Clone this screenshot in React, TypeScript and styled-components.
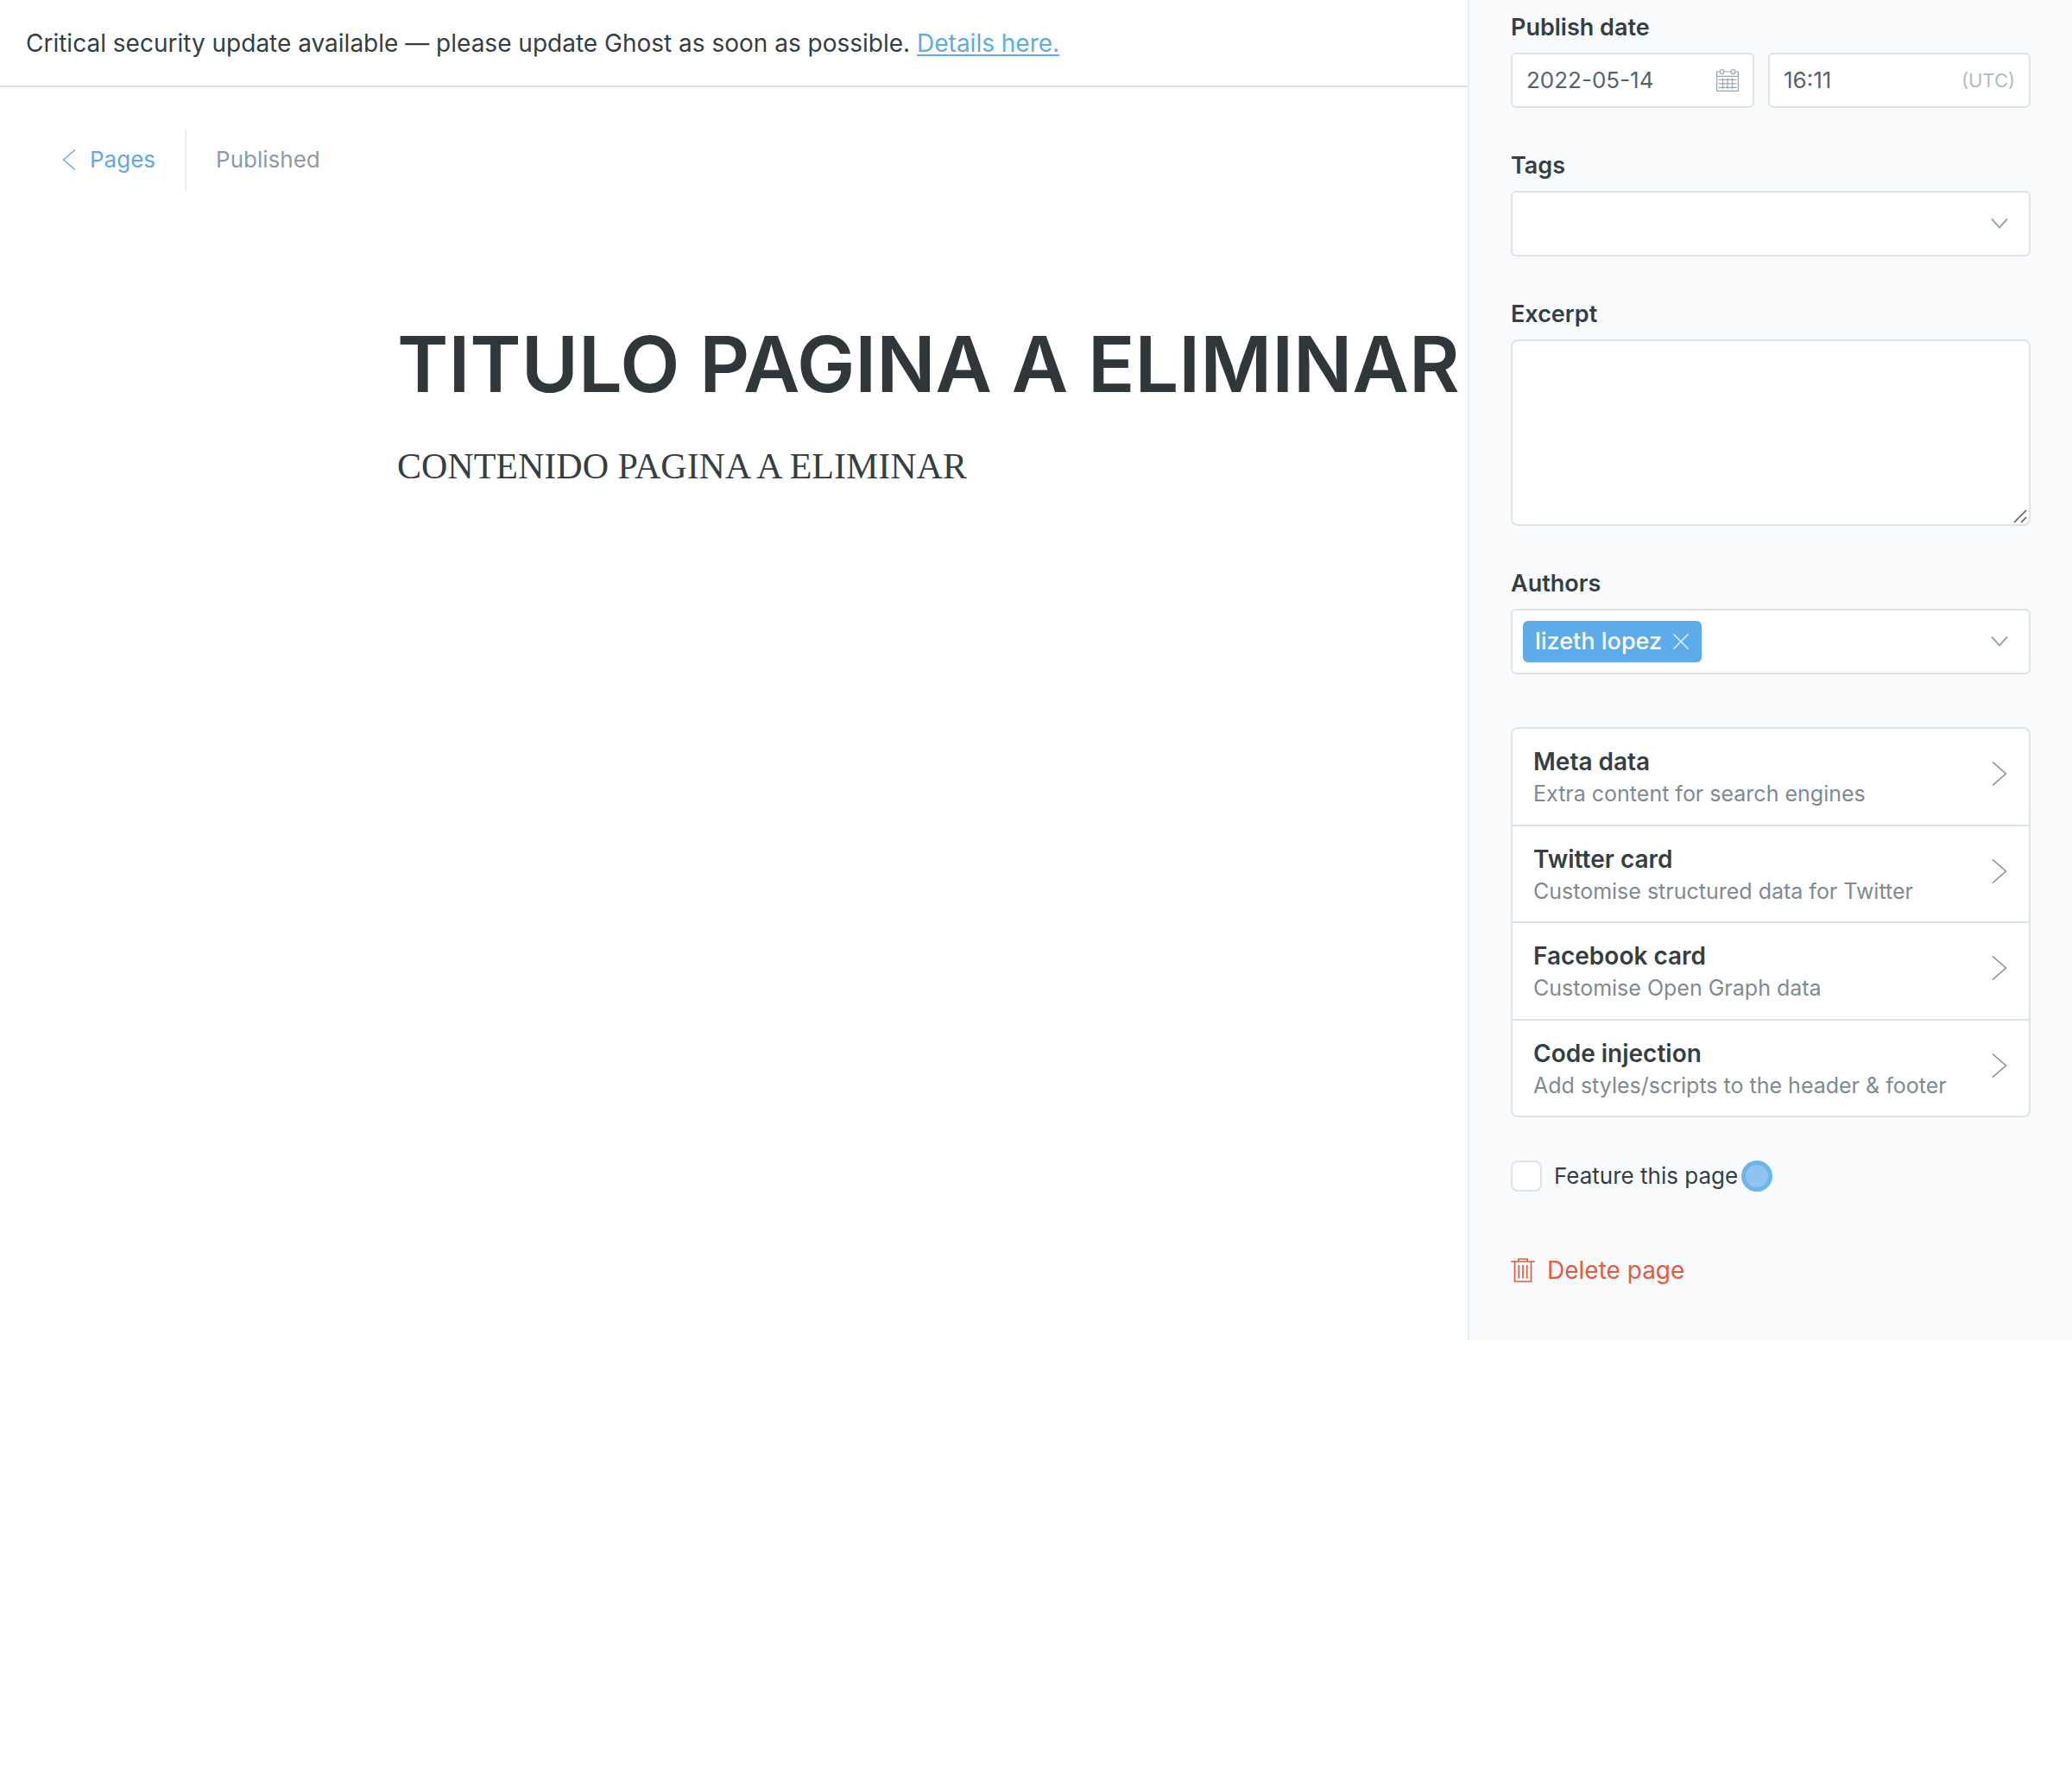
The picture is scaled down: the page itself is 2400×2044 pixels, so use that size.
import React, { useState } from "react";
import styled, { createGlobalStyle } from "styled-components";

const color = {
  ink: "#343f44",
  heading: "#30373b",
  field: "#55646c",
  muted: "#7c8b95",
  faint: "#b0bcc3",
  icon: "#98a8b3",
  blue: "#5dabe9",
  red: "#e25d3e",
  line: "#dae4eb",
  panel: "#f9fafc",
};

const GlobalStyle = createGlobalStyle`
  *, *::before, *::after { box-sizing: border-box; }
  body {
    margin: 0;
    background: #fff;
    color: ${color.ink};
    font-family: Inter, "Liberation Sans", sans-serif;
    font-size: 26px;
    line-height: 32px;
  }
  button, input, select, textarea { font: inherit; color: inherit; }
`;

const Layout = styled.div`
  display: grid;
  grid-template-columns: minmax(0, 1fr) 700px;
  align-items: start;
`;

const Main = styled.main`
  min-width: 0;
`;

const Alert = styled.aside`
  padding: 33px 30px 32px;
  border-bottom: 2px solid #dfe1e3;
  font-size: 28px;
  line-height: 34px;
`;

const AlertLink = styled.a`
  color: ${color.blue};
  text-decoration: underline;
  text-decoration-thickness: 2px;
  text-underline-offset: 3px;
  text-decoration-skip-ink: none;
`;

const Header = styled.header`
  display: flex;
  align-items: center;
  height: 72px;
  margin-top: 48px;
  padding-left: 72px;
`;

const BackLink = styled.a`
  display: flex;
  align-items: center;
  align-self: stretch;
  gap: 16px;
  padding-right: 34px;
  border-right: 2px solid #e5eff5;
  color: ${color.blue};
  text-decoration: none;
`;

const Status = styled.span`
  padding-left: 34px;
  color: #8b9ba7;
`;

const Canvas = styled.article`
  padding: 146px 0 0 460px;
`;

const Title = styled.h1`
  margin: 0;
  color: ${color.heading};
  font-size: 90px;
  font-weight: 600;
  line-height: 110px;
  white-space: nowrap;
`;

const Body = styled.p`
  margin: 33px 0 0;
  font-family: "Liberation Serif", serif;
  font-size: 42px;
  line-height: 60px;
`;

const Sidebar = styled.aside`
  padding: 16px 48px 65px;
  border-left: 2px solid #e5eff5;
  background: ${color.panel};
`;

const Field = styled.div`
  display: grid;
  gap: 13px;
  margin-bottom: 51px;
`;

const Label = styled.label`
  justify-self: start;
  font-size: 27px;
  font-weight: 600;
`;

const DateTime = styled.div`
  display: grid;
  grid-template-columns: 282fr 304fr;
  gap: 16px;
`;

const Box = styled.div<{ $height: number }>`
  display: flex;
  align-items: center;
  min-width: 0;
  height: ${(p) => p.$height}px;
  padding: 0 16px;
  border: 2px solid ${color.line};
  border-radius: 6px;
  background: #fff;
`;

const TextInput = styled.input`
  flex: 1;
  min-width: 0;
  padding: 0;
  border: 0;
  outline: 0;
  background: none;
  color: ${color.field};
`;

const Zone = styled.small`
  color: ${color.faint};
  font-size: 22px;
`;

const Tokens = styled(Box)`
  padding: 0 24px 0 12px;
`;

const Picker = styled.select`
  flex: 1;
  min-width: 0;
  height: 48px;
  border: 0;
  outline: 0;
  appearance: none;
  background: none;
`;

const Token = styled.span`
  display: flex;
  align-items: center;
  gap: 13px;
  height: 48px;
  padding: 0 15px 0 14px;
  border-radius: 6px;
  background: ${color.blue};
  color: #fff;
  font-size: 27px;
  font-weight: 500;
`;

const PlainButton = styled.button`
  display: flex;
  align-items: center;
  padding: 0;
  border: 0;
  background: none;
  cursor: pointer;
`;

const AreaWrap = styled.div`
  position: relative;
  display: flex;
`;

const Area = styled.textarea`
  flex: 1;
  height: 216px;
  padding: 12px 18px;
  border: 2px solid ${color.line};
  border-radius: 8px;
  outline: 0;
  background: #fff;
  resize: none;
`;

const Grip = styled.svg`
  position: absolute;
  right: 4px;
  bottom: 3px;
  pointer-events: none;
`;

const Menu = styled.nav`
  display: grid;
  grid-auto-rows: 1fr;
  gap: 2px;
  min-height: 452px;
  margin: 61px 0 50px;
  overflow: hidden;
  border: 2px solid ${color.line};
  border-radius: 8px;
  background: ${color.line};
`;

const MenuRow = styled.button`
  display: flex;
  align-items: flex-start;
  justify-content: space-between;
  padding: 20px 25px 14px 24px;
  border: 0;
  background: #fff;
  text-align: left;
  cursor: pointer;
`;

const MenuTitle = styled.strong`
  display: block;
  font-size: 28px;
  font-weight: 600;
  line-height: 36px;
`;

const MenuText = styled.span`
  display: block;
  color: ${color.muted};
  font-size: 25px;
  line-height: 38px;
`;

const MenuIcon = styled.svg`
  margin-top: 18px;
`;

const Feature = styled.div`
  display: flex;
  align-items: center;
  gap: 4px;
  height: 36px;
  margin-bottom: 75px;
`;

const CheckLabel = styled.label`
  display: flex;
  align-items: center;
  gap: 14px;
`;

const Check = styled.input`
  width: 36px;
  height: 36px;
  margin: 0;
  border: 2px solid ${color.line};
  border-radius: 8px;
  appearance: none;
  background: #fff;

  &:checked {
    background: ${color.blue};
  }
`;

const Pointer = styled.span`
  width: 36px;
  height: 36px;
  border: 5px solid #6db4ed;
  border-radius: 50%;
  background: #90c4f0;
`;

const DeleteButton = styled(PlainButton)`
  gap: 14px;
  color: ${color.red};
  font-size: 28px;
  line-height: 32px;
`;

const ChevronDown = () => (
  <svg width="20" height="14" viewBox="0 0 20 14" fill="none" stroke={color.icon} strokeWidth="2" aria-hidden="true">
    <path d="M1 1.5 10 11.5 19 1.5" />
  </svg>
);

const ChevronRight = () => (
  <MenuIcon width="18" height="28" viewBox="0 0 18 28" fill="none" stroke={color.muted} strokeWidth="1.4" aria-hidden="true">
    <path d="M1 .5 16.5 14 1 27.5" />
  </MenuIcon>
);

const ChevronLeft = () => (
  <svg width="16" height="24" viewBox="0 0 16 24" fill="none" stroke={color.blue} strokeWidth="1.4" aria-hidden="true">
    <path d="M15 .5 1.5 12 15 23.5" />
  </svg>
);

const Calendar = () => (
  <svg width="26" height="26" viewBox="0 0 26 26" fill="none" stroke={color.icon} strokeWidth="1.2" aria-hidden="true">
    <path d="M4 3H.6V25.4H25.4V3H22M9 3H17M.6 8.4H25.4" />
    <rect x="4.3" y=".6" width="4.4" height="5" rx="2" />
    <rect x="17.3" y=".6" width="4.4" height="5" rx="2" />
    <path d="M2.5 12.3H23.5M2.5 16.8H23.5M2.5 21.3H23.5M7.5 10.3V23M13 10.3V23M18.5 10.3V23" />
  </svg>
);

const Cross = () => (
  <svg width="18" height="18" viewBox="0 0 18 18" fill="none" stroke="#e4f1fc" strokeWidth="1.5" aria-hidden="true">
    <path d="M.5 .5 17.5 17.5M17.5 .5 .5 17.5" />
  </svg>
);

const Trash = () => (
  <svg width="28" height="28" viewBox="0 0 28 28" fill="none" stroke={color.red} strokeWidth="1.7" aria-hidden="true">
    <path d="M0 4H28M8.8 4V1H19.2V4M4.5 4V27H23.5V4" />
    <path d="M9.3 8V23.5M14 8V23.5M18.7 8V23.5" />
  </svg>
);

const sections = [
  { title: "Meta data", text: "Extra content for search engines" },
  { title: "Twitter card", text: "Customise structured data for Twitter" },
  { title: "Facebook card", text: "Customise Open Graph data" },
  { title: "Code injection", text: "Add styles/scripts to the header & footer" },
];

function TokenField({ id, label, initial }: { id: string; label: string; initial: string[] }) {
  const [tokens, setTokens] = useState(initial);
  return (
    <Field>
      <Label htmlFor={id}>{label}</Label>
      <Tokens $height={76}>
        {tokens.map((name) => (
          <Token key={name}>
            {name}
            <PlainButton
              type="button"
              aria-label={`Remove ${name}`}
              onClick={() => setTokens(tokens.filter((t) => t !== name))}
            >
              <Cross />
            </PlainButton>
          </Token>
        ))}
        <Picker id={id} defaultValue="">
          <option value="" />
        </Picker>
        <ChevronDown />
      </Tokens>
    </Field>
  );
}

export default function App() {
  const [date, setDate] = useState("2022-05-14");
  const [time, setTime] = useState("16:11");

  return (
    <>
      <GlobalStyle />
      <Layout>
        <Main>
          <Alert>
            Critical security update available — please update Ghost as soon as possible.{" "}
            <AlertLink href="#details">Details here.</AlertLink>
          </Alert>
          <Header>
            <BackLink href="#pages">
              <ChevronLeft />
              Pages
            </BackLink>
            <Status>Published</Status>
          </Header>
          <Canvas>
            <Title>TITULO PAGINA A ELIMINAR</Title>
            <Body>CONTENIDO PAGINA A ELIMINAR</Body>
          </Canvas>
        </Main>
        <Sidebar>
          <Field>
            <Label htmlFor="publish-date">Publish date</Label>
            <DateTime>
              <Box $height={64}>
                <TextInput id="publish-date" value={date} onChange={(e) => setDate(e.target.value)} />
                <Calendar />
              </Box>
              <Box $height={64}>
                <TextInput aria-label="Publish time" value={time} onChange={(e) => setTime(e.target.value)} />
                <Zone>(UTC)</Zone>
              </Box>
            </DateTime>
          </Field>
          <TokenField id="tags" label="Tags" initial={[]} />
          <Field>
            <Label htmlFor="excerpt">Excerpt</Label>
            <AreaWrap>
              <Area id="excerpt" />
              <Grip width="16" height="16" viewBox="0 0 16 16" stroke="#555" strokeWidth="1.5" aria-hidden="true">
                <path d="M1 15 15 1M9 15 15 9" />
              </Grip>
            </AreaWrap>
          </Field>
          <TokenField id="authors" label="Authors" initial={["lizeth lopez"]} />
          <Menu>
            {sections.map((s) => (
              <MenuRow key={s.title} type="button">
                <span>
                  <MenuTitle>{s.title}</MenuTitle>
                  <MenuText>{s.text}</MenuText>
                </span>
                <ChevronRight />
              </MenuRow>
            ))}
          </Menu>
          <Feature>
            <CheckLabel>
              <Check type="checkbox" />
              Feature this page
            </CheckLabel>
            <Pointer />
          </Feature>
          <DeleteButton type="button">
            <Trash />
            Delete page
          </DeleteButton>
        </Sidebar>
      </Layout>
    </>
  );
}
